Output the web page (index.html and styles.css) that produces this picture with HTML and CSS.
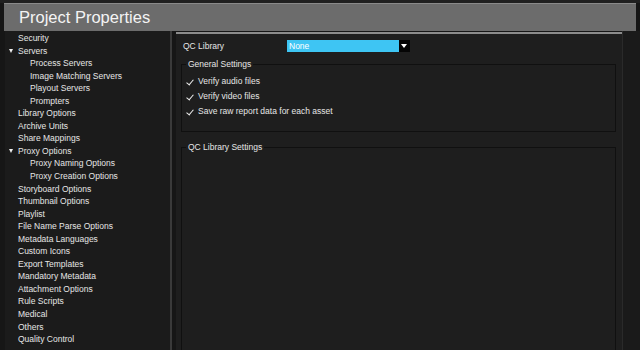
FILE: index.html
```html
<!DOCTYPE html>
<html>
<head>
    <title>Project Properties</title>
    <link rel="stylesheet" href="styles.css">
</head>
<body>
    <div class="topstrip"></div>
    <div class="header">
        <h1>Project Properties</h1>
    </div>
    <div class="main">
        <div class="sidebar">
            <div class="item">Security</div>
            <div class="item open">Servers</div>
            <div class="item sub">Process Servers</div>
            <div class="item sub">Image Matching Servers</div>
            <div class="item sub">Playout Servers</div>
            <div class="item sub">Prompters</div>
            <div class="item">Library Options</div>
            <div class="item">Archive Units</div>
            <div class="item">Share Mappings</div>
            <div class="item open">Proxy Options</div>
            <div class="item sub">Proxy Naming Options</div>
            <div class="item sub">Proxy Creation Options</div>
            <div class="item">Storyboard Options</div>
            <div class="item">Thumbnail Options</div>
            <div class="item">Playlist</div>
            <div class="item">File Name Parse Options</div>
            <div class="item">Metadata Languages</div>
            <div class="item">Custom Icons</div>
            <div class="item">Export Templates</div>
            <div class="item">Mandatory Metadata</div>
            <div class="item">Attachment Options</div>
            <div class="item">Rule Scripts</div>
            <div class="item">Medical</div>
            <div class="item">Others</div>
            <div class="item">Quality Control</div>
        </div>
        <div class="content">
            <div class="row">
                <span class="row-label">QC Library</span>
                <div class="select">
                    <span class="select-value">None</span>
                    <span class="select-arrow"></span>
                </div>
            </div>
            <fieldset class="group general">
                <legend>General Settings</legend>
                <div class="check">Verify audio files</div>
                <div class="check">Verify video files</div>
                <div class="check">Save raw report data for each asset</div>
            </fieldset>
            <fieldset class="group library">
                <legend>QC Library Settings</legend>
            </fieldset>
        </div>
        <div class="edge"></div>
    </div>
</body>
</html>
```

FILE: styles.css
```css
body {
    margin: 0;
    width: 640px;
    height: 350px;
    overflow: hidden;
    background-color: #161616;
    font-family: "Liberation Sans", Arial, sans-serif;
    color: #e6e6e6;
}
.topstrip {
    height: 3px;
    background-color: #202020;
}
.header {
    margin-left: 4px;
    width: 632px;
    height: 28px;
    background-color: #6c6c6c;
    border-top: 1px solid #8a8a8a;
    box-sizing: border-box;
    display: flex;
    align-items: center;
}
h1 {
    margin: 0 0 0 15px;
    font-size: 16.5px;
    font-weight: normal;
    color: #f4f4f4;
}
.main {
    display: flex;
    height: 319px;
    margin-left: 5px;
}
.sidebar {
    width: 165px;
    padding-top: 1px;
    background-color: #1b1b1b;
    border-right: 2px solid #3a3a3a;
}
.item {
    position: relative;
    height: 12.55px;
    line-height: 12.55px;
    padding-left: 13px;
    font-size: 8.5px;
    white-space: nowrap;
}
.item.sub {
    padding-left: 25px;
}
.item.open::before {
    content: "";
    position: absolute;
    left: 4px;
    top: 4px;
    border-left: 2.5px solid transparent;
    border-right: 2.5px solid transparent;
    border-top: 4px solid #eee;
}
.content {
    flex: 1;
    display: flex;
    flex-direction: column;
    margin-left: 4px;
    margin-top: 1px;
    padding: 5px 6px 0 5px;
    background-color: #1e1e1e;
    border-top: 2px solid #8c8c8c;
    font-size: 8.5px;
    overflow: hidden;
}
.row {
    display: flex;
    align-items: center;
    height: 12px;
    margin-top: 1px;
    flex: none;
}
.row-label {
    width: 104px;
    padding-left: 2px;
}
.select {
    display: flex;
    width: 123px;
    height: 12px;
}
.select-value {
    flex: 1;
    background-color: #3ec5f3;
    color: #ffffff;
    line-height: 12px;
    padding-left: 2px;
}
.select-arrow {
    width: 11px;
    background-color: #050505;
    position: relative;
}
.select-arrow::after {
    content: "";
    position: absolute;
    left: 2px;
    top: 4px;
    border-left: 3.5px solid transparent;
    border-right: 3.5px solid transparent;
    border-top: 4px solid #fff;
}
.group {
    margin: 0;
    border: 1px solid #101010;
    padding: 5px 0 0 5px;
    min-width: 0;
}
.group legend {
    padding: 0 2px;
    margin-left: -1px;
    font-size: 8.5px;
    line-height: 10px;
}
.general {
    margin-top: 7px;
    height: 73px;
    box-sizing: border-box;
    flex: none;
}
.library {
    margin-top: 10px;
    margin-bottom: -4px;
    flex: 1;
}
.check {
    position: relative;
    height: 15px;
    line-height: 15px;
    padding-left: 11px;
}
.check::before {
    content: "";
    position: absolute;
    left: 1px;
    top: 4px;
    width: 3px;
    height: 6px;
    border-right: 1.5px solid #eee;
    border-bottom: 1.5px solid #eee;
    transform: rotate(40deg);
}
.edge {
    width: 18px;
    background-color: #1a1a1a;
    border-left: 1px solid #2a2a2a;
    box-sizing: border-box;
}
```
